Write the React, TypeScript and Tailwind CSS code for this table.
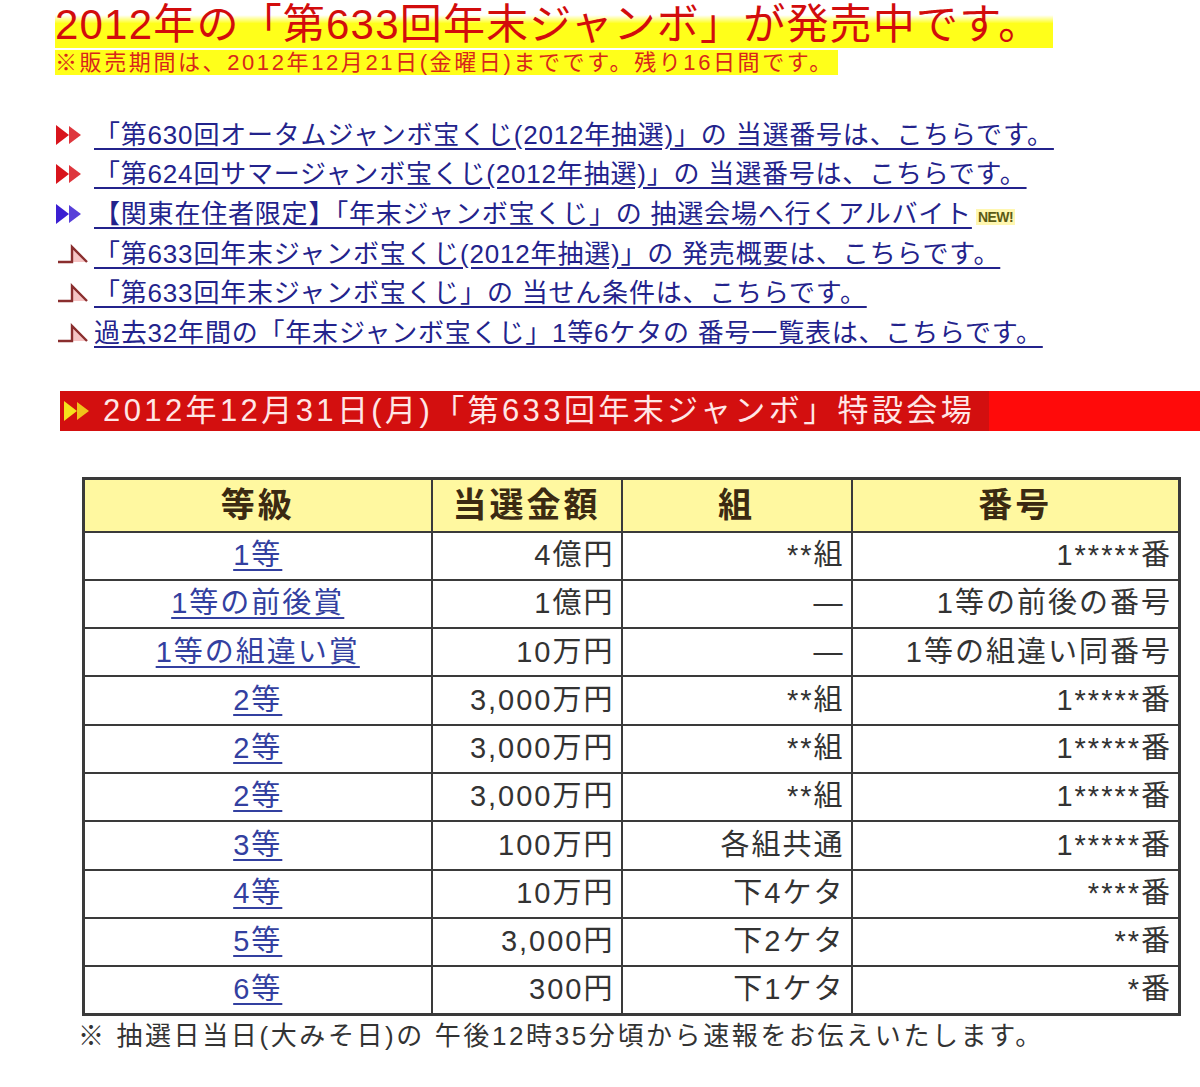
import React from 'react'

const JP = "font-['Liberation_Sans','Noto_Sans_CJK_JP',sans-serif]"

type TLink = {
	icon: 'red' | 'blue' | 'flag'
	text: string
	isNew?: boolean
}

const links: TLink[] = [
	{ icon: 'red', text: '「第630回オータムジャンボ宝くじ(2012年抽選)」の 当選番号は、こちらです。' },
	{ icon: 'red', text: '「第624回サマージャンボ宝くじ(2012年抽選)」の 当選番号は、こちらです。' },
	{ icon: 'blue', text: '【関東在住者限定】「年末ジャンボ宝くじ」の 抽選会場へ行くアルバイト', isNew: true },
	{ icon: 'flag', text: '「第633回年末ジャンボ宝くじ(2012年抽選)」の 発売概要は、こちらです。' },
	{ icon: 'flag', text: '「第633回年末ジャンボ宝くじ」の 当せん条件は、こちらです。' },
	{ icon: 'flag', text: '過去32年間の「年末ジャンボ宝くじ」1等6ケタの 番号一覧表は、こちらです。' },
]

const rows = [
	['1等', '4億円', '**組', '1*****番'],
	['1等の前後賞', '1億円', '—', '1等の前後の番号'],
	['1等の組違い賞', '10万円', '—', '1等の組違い同番号'],
	['2等', '3,000万円', '**組', '1*****番'],
	['2等', '3,000万円', '**組', '1*****番'],
	['2等', '3,000万円', '**組', '1*****番'],
	['3等', '100万円', '各組共通', '1*****番'],
	['4等', '10万円', '下4ケタ', '****番'],
	['5等', '3,000円', '下2ケタ', '**番'],
	['6等', '300円', '下1ケタ', '*番'],
]

const DoubleArrow = ({ color }: { color: string }) => (
	<svg width="28" height="22" viewBox="0 0 28 22">
		<polygon points="1,1 14,11 1,21" fill={color} />
		<polygon points="14,2 26,11 14,20" fill={color} opacity="0.85" />
	</svg>
)

const FlagIcon = () => (
	<svg width="34" height="24" viewBox="0 0 34 24">
		<polygon points="17,5 32,20 17,20" fill="#f6c4c4" />
		<path d="M3 20 H17 V5 L32 20" fill="none" stroke="#8a2e2e" strokeWidth="2.4" />
	</svg>
)

const App = () => {
	return (
		<div className={`w-[1200px] h-[1087px] bg-white overflow-hidden ${JP}`}>
			{/* タイトル */}
			<div className="pl-[55px]">
				<div className="text-[42px] leading-[50px] tracking-[1.2px] text-[#d20c0c]">
					<span className="bg-[linear-gradient(to_bottom,#ffffff_0%,#ffffff_30%,#ffff1a_48%,#ffff1a_100%)] pr-[12px]">
						2012年の「第633回年末ジャンボ」が発売中です。
					</span>
				</div>
				<div className="text-[22px] leading-[25px] tracking-[2.6px] text-[#d8261a]">
					<span className="bg-[#ffff1a] pr-[4px]">
						※販売期間は、2012年12月21日(金曜日)までです。残り16日間です。
					</span>
				</div>
			</div>

			{/* リンク一覧 */}
			<div className="pl-[55px] mt-[40px]">
				{links.map(({ icon, text, isNew }, i) => (
					<div key={i} className="flex items-center h-[39.6px]">
						<div className="w-[39px] flex items-center">
							{icon === 'red' && <DoubleArrow color="#d8141c" />}
							{icon === 'blue' && <DoubleArrow color="#3b1fd2" />}
							{icon === 'flag' && <FlagIcon />}
						</div>
						<a className="text-[26px] leading-[32px] tracking-[0.8px] text-[#23238c] underline decoration-[#23238c] underline-offset-[4px] whitespace-nowrap">
							{text}
						</a>
						{isNew && (
							<span className="ml-[4px] mt-[6px] px-[2px] text-[14px] leading-[16px] font-bold tracking-[-0.5px] text-[#5b5a14] bg-[#fff7b0]">
								NEW!
							</span>
						)}
					</div>
				))}
			</div>

			{/* 特設会場 */}
			<div className="ml-[60px] mt-[38px] flex h-[40px]">
				<div className="flex items-center bg-[#d30f0f] pl-[3px] pr-[14px]">
					<DoubleArrow color="#f5e21c" />
					<span className="ml-[12px] text-[31px] leading-[40px] tracking-[3.4px] text-[#ffe6e6] whitespace-nowrap">
						2012年12月31日(月)「第633回年末ジャンボ」特設会場
					</span>
				</div>
				<div className="flex-1 bg-[#ff0a0a]" />
			</div>

			{/* 当選番号表 */}
			<div className="ml-[82px] mt-[46px] w-[1096px]">
				<table className="w-full border-collapse border-[3px] border-[#3a3a3a] table-fixed">
					<colgroup>
						<col className="w-[348px]" />
						<col className="w-[190px]" />
						<col className="w-[230px]" />
						<col className="w-[328px]" />
					</colgroup>
					<thead>
						<tr className="h-[52px] bg-[#fff8a0]">
							{['等級', '当選金額', '組', '番号'].map((h) => (
								<th
									key={h}
									className="border-2 border-[#3a3a3a] text-[34px] tracking-[3px] font-bold text-[#3b2a12] text-center"
								>
									{h}
								</th>
							))}
						</tr>
					</thead>
					<tbody>
						{rows.map(([grade, amount, group, number], i) => (
							<tr key={i} className="h-[48.3px] text-[29px] tracking-[2px] text-[#333333]">
								<td className="border-2 border-[#3a3a3a] text-center">
									<a className="text-[#3340a0] underline decoration-[#3340a0] underline-offset-[4px]">
										{grade}
									</a>
								</td>
								<td className="border-2 border-[#3a3a3a] text-right pr-[6px]">{amount}</td>
								<td className="border-2 border-[#3a3a3a] text-right pr-[6px]">{group}</td>
								<td className="border-2 border-[#3a3a3a] text-right pr-[6px]">{number}</td>
							</tr>
						))}
					</tbody>
				</table>
				<div className="-ml-[4px] mt-[2px] text-[26px] leading-[36px] tracking-[2.6px] text-[#333333] whitespace-nowrap">
					※ 抽選日当日(大みそ日)の 午後12時35分頃から速報をお伝えいたします。
				</div>
			</div>
		</div>
	)
}

export default App
